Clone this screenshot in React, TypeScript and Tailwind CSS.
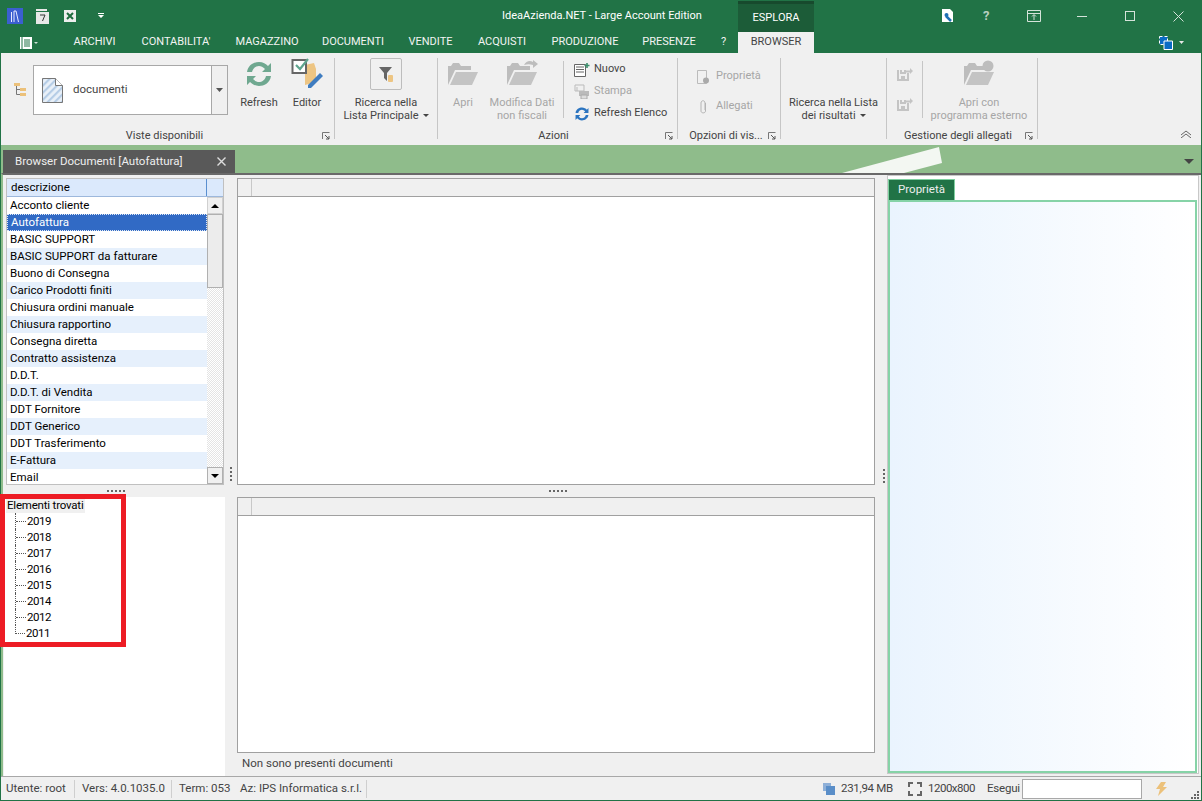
import { ReactNode } from "react";

const listItems = [
  "Acconto cliente",
  "Autofattura",
  "BASIC SUPPORT",
  "BASIC SUPPORT da fatturare",
  "Buono di Consegna",
  "Carico Prodotti finiti",
  "Chiusura ordini manuale",
  "Chiusura rapportino",
  "Consegna diretta",
  "Contratto assistenza",
  "D.D.T.",
  "D.D.T. di Vendita",
  "DDT Fornitore",
  "DDT Generico",
  "DDT Trasferimento",
  "E-Fattura",
  "Email",
];

const years = ["2019", "2018", "2017", "2016", "2015", "2014", "2012", "2011"];

const tabs = [
  { label: "ARCHIVI", width: "w-[41px]" },
  { label: "CONTABILITA'", width: "w-[70px]" },
  { label: "MAGAZZINO", width: "w-[60px]" },
  { label: "DOCUMENTI", width: "w-[60px]" },
  { label: "VENDITE", width: "w-[43px]" },
  { label: "ACQUISTI", width: "w-[48px]" },
  { label: "PRODUZIONE", width: "w-[66px]" },
  { label: "PRESENZE", width: "w-[50px]" },
  { label: "?", width: "w-[7px]" },
];

const Launcher = () => (
  <svg width="8" height="8" viewBox="0 0 8 8" className="shrink-0 mt-[4px]">
    <path d="M0.5 7V0.5H7.5" fill="none" stroke="#777" />
    <path d="M3 3L7 7M7 4V7H4" fill="none" stroke="#555" />
  </svg>
);

const Caret = ({ color = "#444" }: { color?: string }) => (
  <svg width="6" height="3" viewBox="0 0 6 3" className="inline-block ml-1 mb-[2px]">
    <path d="M0 0H6L3 3Z" fill={color} />
  </svg>
);

const FolderIcon = ({ badge }: { badge?: ReactNode }) => (
  <svg width="32" height="28" viewBox="0 0 32 28">
    <path d="M1 25V6H4L6 3H12L14 6H24V10H8L1 25Z" fill="#bdbdbd" />
    <path d="M3 25L9 12H31L25 25Z" fill="#c4c4c4" />
    {badge}
  </svg>
);

const RibbonGroup = ({
  width,
  label,
  launcher,
  labelClass = "",
  children,
}: {
  width: string;
  label?: string;
  launcher?: boolean;
  labelClass?: string;
  children: ReactNode;
}) => (
  <div className={`${width} shrink-0 h-[81px] mt-[5px] flex flex-col border-r border-[#c6c6c6]`}>
    <div className="flex h-[70px]">{children}</div>
    <div className="flex items-start h-[11px] pr-[4px]">
      <span className={`flex-1 text-center leading-[16px] text-[#444] ${labelClass}`}>{label}</span>
      {launcher && <Launcher />}
    </div>
  </div>
);

const BigButton = ({
  icon,
  lines,
  disabled,
  caret,
  className = "",
}: {
  icon?: ReactNode;
  lines: string[];
  disabled?: boolean;
  caret?: boolean;
  className?: string;
}) => (
  <div className={`flex flex-col items-center ${className}`}>
    <div className="h-[32px] flex items-center justify-center">{icon}</div>
    <div className={`mt-[6px] text-center leading-[13px] whitespace-nowrap ${disabled ? "text-[#a6a6a6]" : "text-[#444]"}`}>
      {lines.map((l, i) => (
        <div key={l}>
          {l}
          {caret && i === lines.length - 1 && <Caret />}
        </div>
      ))}
    </div>
  </div>
);

const SaveArrowIcon = () => (
  <svg width="16" height="13" viewBox="0 0 16 13">
    <path d="M1 2V12H11V5M4 2V5H8V2" fill="none" stroke="#c4c4c4" strokeWidth="2" />
    <path d="M4 8H8V11H4Z" fill="#c4c4c4" />
    <path d="M9 2.5H13V0L16 3L13 6V4.5H9Z" fill="#c4c4c4" />
  </svg>
);

const Grid = ({ className = "" }: { className?: string }) => (
  <div className={`bg-white border border-[#a0a0a0] ${className}`}>
    <div className="h-[18px] bg-[#f0f0f0] border-b border-[#a0a0a0] flex">
      <div className="w-[14px] border-r border-[#c8c8c8]" />
    </div>
  </div>
);

const Dots = ({ vertical }: { vertical?: boolean }) => (
  <div className={`flex gap-[2px] ${vertical ? "flex-col" : ""}`}>
    <span className="w-[2px] h-[2px] bg-[#666]" />
    <span className="w-[2px] h-[2px] bg-[#666]" />
    <span className="w-[2px] h-[2px] bg-[#666]" />
    <span className="w-[2px] h-[2px] bg-[#666]" />
    {!vertical && <span className="w-[2px] h-[2px] bg-[#666]" />}
  </div>
);

export default function App() {
  return (
    <div className="relative w-[1202px] h-[801px] overflow-hidden flex flex-col bg-[#217346] text-[11px] font-['Roboto',sans-serif]">
      {/* Title bar */}
      <div className="h-[32px] shrink-0 flex items-center relative">
        <div className="ml-[7px] w-[16px] h-[16px] bg-[#3b5fd0] flex items-center justify-center">
          <svg width="10" height="13" viewBox="0 0 10 13">
            <path d="M1.5 12V2M4 12V1H6L8.5 12" fill="none" stroke="#e8ecff" strokeWidth="1" />
          </svg>
        </div>
        <svg width="13" height="15" viewBox="0 0 13 15" className="ml-[13px]">
          <path d="M0 0H11V2H0Z" fill="#e8e8e8" />
          <path d="M0 3H13V15H0Z" fill="#e8e8e8" />
          <path d="M4 6H9L6.5 12" fill="none" stroke="#333" />
        </svg>
        <svg width="12" height="12" viewBox="0 0 12 12" className="ml-[15px]">
          <path d="M0 0H12V12H0Z" fill="#eee" />
          <path d="M3 3L9 9M9 3L3 9" stroke="#1f6b3e" strokeWidth="2" />
        </svg>
        <svg width="6" height="6" viewBox="0 0 6 6" className="ml-[22px]">
          <path d="M0 0H6V1H0Z M0 2H6L3 5Z" fill="#fff" />
        </svg>
        <div className="w-[398px]" />
        <span className="w-[198px] text-center text-white whitespace-nowrap">IdeaAzienda.NET - Large Account Edition</span>
        <div className="ml-[38px] w-[76px] h-[31px] mt-px bg-[#1c5c38] border-t-[3px] border-[#174a2d] flex items-center justify-center text-white">
          ESPLORA
        </div>
        <div className="flex-1" />
        <svg width="13" height="14" viewBox="0 0 13 14" className="mr-[28px]">
          <path d="M0 0H8L11 3V13H0Z" fill="#fff" />
          <path d="M4 7L9 12" stroke="#1f6fb5" strokeWidth="2.5" />
          <circle cx="4.5" cy="6" r="2" fill="#1f6fb5" />
        </svg>
        <span className="w-[7px] text-[13px] font-bold text-[#b8cfc0] mr-[37px]">?</span>
        <svg width="14" height="12" viewBox="0 0 14 12" className="mr-[36px]">
          <path d="M0.5 0.5H13.5V11.5H0.5ZM0.5 3.5H13.5M7 10V5M5 6.5L7 4.5L9 6.5" fill="none" stroke="#d5e3da" />
        </svg>
        <div className="w-[10px] h-px bg-[#d5e3da] mr-[38px]" />
        <div className="w-[10px] h-[10px] border border-[#d5e3da] mr-[38px]" />
        <svg width="11" height="11" viewBox="0 0 11 11" className="mr-[18px]">
          <path d="M0.5 0.5L10.5 10.5M10.5 0.5L0.5 10.5" stroke="#d5e3da" />
        </svg>
      </div>

      {/* Ribbon tabs */}
      <div className="h-[21px] shrink-0 flex items-center">
        <svg width="12" height="12" viewBox="0 0 12 12" className="ml-[20px]">
          <path d="M0 0H12V12H0Z" fill="#fff" />
          <path d="M2 0V12M4 3H10M4 5H10M4 7H10M4 9H10" stroke="#217346" />
        </svg>
        <svg width="4" height="2" viewBox="0 0 4 2" className="ml-[2px] mr-[36px]">
          <path d="M0 0H4L2 2Z" fill="#cfe0d6" />
        </svg>
        <div className="flex gap-[26px]">
          {tabs.map((t) => (
            <span key={t.label} className={`${t.width} flex justify-center text-[#f3f3f3] whitespace-nowrap`}>
              {t.label}
            </span>
          ))}
        </div>
        <div className="ml-[11px] w-[76px] h-full bg-[#f0f0f0] flex items-center justify-center text-[#444]">BROWSER</div>
        <div className="flex-1" />
        <div className="mr-[18px] flex items-center gap-[6px]">
          <svg width="14" height="14" viewBox="0 0 14 14">
            <path d="M0.5 0.5H8.5V8.5H0.5Z" fill="#0a6cc4" stroke="#fff" strokeDasharray="3 2" />
            <path d="M5 5H13.5V13.5H5Z" fill="#0a6cc4" stroke="#fff" />
          </svg>
          <svg width="5" height="3" viewBox="0 0 5 3">
            <path d="M0 0H5L2.5 3Z" fill="#e8e8e8" />
          </svg>
        </div>
      </div>

      {/* Ribbon */}
      <div className="h-[92px] shrink-0 mx-px bg-[#f0f0f0] flex relative">
        <RibbonGroup width="w-[334px]" label="Viste disponibili" launcher labelClass="pl-[6px]">
          <div className="w-[32px] flex items-start pt-[25px] pl-[13px]">
            <svg width="12" height="13" viewBox="0 0 12 13">
              <path d="M0 0H6V3H0ZM6 5H12V8H6ZM6 10H12V13H6Z" fill="#ecc17a" />
              <path d="M2.5 3V11.5H6M2.5 6.5H6" fill="none" stroke="#777" />
            </svg>
          </div>
          <div className="mt-[7px] w-[195px] h-[50px] bg-white border border-[#a8a8a8] flex">
            <div className="flex-1 flex items-center">
              <svg width="21" height="25" viewBox="0 0 21 25" className="ml-[8px]">
                <defs>
                  <pattern id="hatch" width="5" height="5" patternUnits="userSpaceOnUse" patternTransform="rotate(-45)">
                    <rect width="5" height="2.5" fill="#b6cde6" />
                    <rect y="2.5" width="5" height="2.5" fill="#e9f0f8" />
                  </pattern>
                </defs>
                <path d="M0.5 0.5H13.5L20.5 7.5V24.5H0.5Z" fill="url(#hatch)" stroke="#777" />
                <path d="M13.5 0.5V7.5H20.5" fill="#fff" stroke="#777" />
              </svg>
              <span className="ml-[10px] text-[#444] text-[11.5px]">documenti</span>
            </div>
            <div className="w-[16px] bg-[#f0f0f0] border-l border-[#a8a8a8] flex items-center justify-center">
              <svg width="7" height="4" viewBox="0 0 7 4">
                <path d="M0 0H7L3.5 4Z" fill="#555" />
              </svg>
            </div>
          </div>
          <BigButton
            className="ml-[11px] w-[40px]"
            lines={["Refresh"]}
            icon={
              <svg width="26" height="26" viewBox="0 0 26 26" fill="#6fa890">
                <path d="M1 11C2 4 8 1 13 1C17 1 20 3 22 5L25 2V11H16L19 8C17 6 15 5 13 5C10 5 7 7 6 11Z" />
                <path d="M25 15C24 22 18 25 13 25C9 25 6 23 4 21L1 24V15H10L7 18C9 20 11 21 13 21C16 21 19 19 20 15Z" />
              </svg>
            }
          />
          <BigButton
            className="ml-[8px] w-[40px]"
            lines={["Editor"]}
            icon={
              <svg width="33" height="30" viewBox="0 0 33 30" className="mt-[-3px]">
                <path d="M14 7L23 5L25 11V24L14 27Z" fill="#edc583" />
                <path d="M1.5 2H15V15H1.5Z" fill="#fff" stroke="#666" strokeWidth="2" />
                <path d="M5 7L9 11L17 1" fill="none" stroke="#5fa58f" strokeWidth="2.2" />
                <path d="M17 27L29 15L32 18L20 30H17Z" fill="#3f7cc0" />
              </svg>
            }
          />
        </RibbonGroup>

        <RibbonGroup width="w-[103px]">
          <BigButton
            className="w-full"
            lines={["Ricerca nella", "Lista Principale"]}
            caret
            icon={
              <div className="w-[32px] h-[32px] border border-[#bdbdbd] rounded-[2px] flex items-center justify-center">
                <svg width="14" height="15" viewBox="0 0 14 15">
                  <path d="M0 0H13L8 6V14L5 11V6Z" fill="#666" />
                  <rect x="9" y="8" width="5" height="7" rx="1" fill="#edc583" />
                </svg>
              </div>
            }
          />
        </RibbonGroup>

        <RibbonGroup width="w-[240px]" label="Azioni" launcher labelClass="pl-[4px]">
          <BigButton
            className="ml-[9px] w-[32px]"
            disabled
            lines={["Apri"]}
            icon={<FolderIcon />}
          />
          <BigButton
            className="ml-[12px] w-[62px]"
            disabled
            lines={["Modifica Dati", "non fiscali"]}
            icon={<FolderIcon badge={<path d="M18 5C20 1 24 0 27 2V0L32 4L27 8V5C24 4 21 4 18 5Z" fill="#bdbdbd" />} />}
          />
          <div className="ml-[10px] w-px h-[57px] mt-[3px] bg-[#c6c6c6]" />
          <div className="ml-[10px] flex flex-col gap-[5px] mt-[3px]">
            <div className="h-[17px] flex items-center gap-[4px] text-[#444]">
              <svg width="16" height="14" viewBox="0 0 16 14">
                <path d="M0.5 1.5H11.5V13.5H0.5Z" fill="#fff" stroke="#666" />
                <path d="M2 4H10M2 6.5H10M2 9H10" stroke="#666" />
                <path d="M13 0V5M10.5 2.5H15.5" stroke="#3a8e6b" strokeWidth="1.6" />
              </svg>
              Nuovo
            </div>
            <div className="h-[17px] flex items-center gap-[4px] text-[#a6a6a6]">
              <svg width="16" height="15" viewBox="0 0 16 15">
                <path d="M1 1H10V7H1Z M3 3V7" fill="none" stroke="#bbb" />
                <path d="M5 7H15V12H5Z" fill="#bbb" />
                <path d="M7 11H13V15H7Z" fill="#ddd" stroke="#aaa" />
              </svg>
              Stampa
            </div>
            <div className="h-[17px] flex items-center gap-[5px] text-[#444]">
              <svg width="14" height="14" viewBox="0 0 26 26" fill="#2b74c0" className="ml-[1px]">
                <path d="M1 11C2 4 8 1 13 1C17 1 20 3 22 5L25 2V11H16L19 8C17 6 15 5 13 5C10 5 7 7 6 11Z" />
                <path d="M25 15C24 22 18 25 13 25C9 25 6 23 4 21L1 24V15H10L7 18C9 20 11 21 13 21C16 21 19 19 20 15Z" />
              </svg>
              Refresh Elenco
            </div>
          </div>
        </RibbonGroup>

        <RibbonGroup width="w-[103px]" label="Opzioni di vis..." launcher labelClass="pl-[6px]">
          <div className="ml-[19px] mt-[12px] flex flex-col gap-[17px] text-[#a6a6a6]">
            <div className="h-[13px] flex items-center gap-[6px]">
              <svg width="13" height="14" viewBox="0 0 13 14">
                <path d="M0.5 0.5H9.5V13.5H0.5Z" fill="none" stroke="#bbb" />
                <circle cx="9" cy="10.5" r="3" fill="#aaa" />
              </svg>
              Proprietà
            </div>
            <div className="h-[13px] flex items-center gap-[9px] ml-[3px]">
              <svg width="7" height="14" viewBox="0 0 7 14">
                <path d="M5.5 3V11C5.5 13.5 1 13.5 1 11V3C1 0 5 0 5 3V10" fill="none" stroke="#b4b4b4" />
              </svg>
              Allegati
            </div>
          </div>
        </RibbonGroup>

        <RibbonGroup width="w-[106px]">
          <div className="w-full mt-[38px] text-center leading-[13px] text-[#444] whitespace-nowrap">
            <div>Ricerca nella Lista</div>
            <div>
              dei risultati
              <Caret />
            </div>
          </div>
        </RibbonGroup>

        <RibbonGroup width="w-[151px]" label="Gestione degli allegati" launcher labelClass="pl-[4px]">
          <div className="ml-[10px] mt-[10px] flex flex-col gap-[17px]">
            <SaveArrowIcon />
            <SaveArrowIcon />
          </div>
          <div className="ml-[9px] w-px h-[57px] mt-[3px] bg-[#c6c6c6]" />
          <BigButton
            className="w-[112px]"
            disabled
            lines={["Apri con", "programma esterno"]}
            icon={<FolderIcon badge={<circle cx="25" cy="6" r="5.5" fill="#bdbdbd" />} />}
          />
        </RibbonGroup>

        <svg width="14" height="8" viewBox="0 0 14 8" className="absolute right-[8px] bottom-[7px]">
          <path d="M2 5L7 1L12 5M2 8L7 4L12 8" fill="none" stroke="#666" />
        </svg>
      </div>

      {/* Document tab band */}
      <div className="h-[28px] shrink-0 mx-px bg-[#8fbc8b] relative flex items-end pl-[2px]">
        <div className="w-[232px] h-[23px] bg-[#595959] text-[#eee] text-[11.5px] flex items-center pl-[12px] pr-[9px]">
          <span className="flex-1 whitespace-nowrap">Browser Documenti [Autofattura]</span>
          <svg width="9" height="9" viewBox="0 0 9 9">
            <path d="M0.5 0.5L8.5 8.5M8.5 0.5L0.5 8.5" stroke="#ddd" strokeWidth="1.4" />
          </svg>
        </div>
        <svg width="110" height="28" viewBox="0 0 110 28" className="absolute left-[841px] top-0">
          <path d="M0 28L97 2L100 18L62 28Z" fill="#f3f7f2" />
        </svg>
        <svg width="10" height="5" viewBox="0 0 10 5" className="absolute right-[7px] top-[14px]">
          <path d="M0 0H10L5 5Z" fill="#444" />
        </svg>
      </div>

      {/* Main area */}
      <div className="flex-1 min-h-0 mx-px bg-[#f0f0f0] border-t-2 border-[#696969] border-l-2 border-l-[#8fbc8b] flex text-[11.5px]">
        {/* Left and middle */}
        <div className="w-[877px] shrink-0 flex flex-col">
          {/* Top row */}
          <div className="h-[310px] shrink-0 flex">
            <div className="w-[218px] ml-[3px] mt-[3px] h-[307px] flex flex-col border border-[#c0c0c0] bg-white">
              <div className="h-[18px] shrink-0 bg-[#dbe9fc] border-b border-[#9db8dc] flex">
                <div className="w-[200px] border-r border-[#5a8fd0] pl-[4px] pt-px flex items-center text-black">descrizione</div>
              </div>
              <div className="flex-1 flex min-h-0">
                <div className="w-[200px] shrink-0 overflow-hidden">
                  {listItems.map((item, i) => (
                    <div
                      key={item}
                      className={`h-[17px] pl-[3px] flex items-center whitespace-nowrap ${
                        i === 1
                          ? "bg-[#316ac5] text-white border border-dotted border-[#dfe8f5] pl-[2px]"
                          : i % 2 === 1
                            ? "bg-[#e6f0fc] text-black"
                            : "bg-white text-black"
                      }`}
                    >
                      {item}
                    </div>
                  ))}
                </div>
                <div className="w-[16px] flex flex-col bg-[repeating-conic-gradient(#e4e4e4_0%_25%,#ffffff_0%_50%)] bg-[length:2px_2px]">
                  <div className="h-[17px] bg-[#f0f0f0] border border-[#d0d0d0] flex items-center justify-center">
                    <svg width="8" height="4" viewBox="0 0 8 4">
                      <path d="M0 4H8L4 0Z" fill="#000" />
                    </svg>
                  </div>
                  <div className="h-[74px] bg-[#ececec] border border-[#b0b0b0]" />
                  <div className="flex-1" />
                  <div className="h-[17px] bg-[#f0f0f0] border border-[#b0b0b0] flex items-center justify-center">
                    <svg width="8" height="4" viewBox="0 0 8 4">
                      <path d="M0 0H8L4 4Z" fill="#000" />
                    </svg>
                  </div>
                </div>
              </div>
            </div>
            <div className="w-[13px] flex items-end justify-center pb-[4px]">
              <Dots vertical />
            </div>
            <Grid className="w-[638px] mt-[3px] h-[307px]" />
          </div>

          {/* Horizontal splitter */}
          <div className="h-[12px] shrink-0 flex items-center">
            <div className="w-[224px] flex justify-center pl-[2px]">
              <Dots />
            </div>
            <div className="w-[651px] flex justify-center pl-[11px]">
              <Dots />
            </div>
          </div>

          {/* Bottom row */}
          <div className="flex-1 flex min-h-0">
            <div className="w-[221px] shrink-0 bg-white pl-[2px] pt-[2px] ml-[1px]">
              <div className="h-[14px] w-[79px] bg-[#f0f0f0] flex items-center text-black pl-[1px] whitespace-nowrap tracking-[-0.2px]">
                Elementi trovati
              </div>
              <div className="ml-[9px]">
                {years.map((y, i) => (
                  <div
                    key={y}
                    className={`h-[16px] flex text-black ${i < years.length - 1 ? "border-l border-dotted border-[#555]" : ""}`}
                  >
                    <div
                      className={`h-[9px] w-[10px] border-b border-dotted border-[#555] ${
                        i === years.length - 1 ? "border-l" : ""
                      }`}
                    />
                    <span className="ml-[1px] leading-[16px] tracking-[-0.5px]">{y}</span>
                  </div>
                ))}
              </div>
            </div>
            <div className="ml-[12px] flex-1 flex flex-col min-w-0 pr-[3px]">
              <Grid className="h-[256px] w-[638px]" />
              <div className="h-[22px] pl-[5px] flex items-center text-[#444]">Non sono presenti documenti</div>
            </div>
          </div>
        </div>

        {/* Right splitter */}
        <div className="w-[7px] shrink-0 flex items-center justify-center">
          <Dots vertical />
        </div>

        {/* Properties panel */}
        <div className="w-[312px] shrink-0 mb-[2px] bg-white border border-[#c8c8c8] flex flex-col pt-[3px] pr-px">
          <div className="w-[67px] h-[21px] bg-[#217346] border border-[#7fd0a0] border-b-0 text-[#eee] flex items-center justify-center">
            Proprietà
          </div>
          <div className="flex-1 border-2 border-[#86d3a7] bg-gradient-to-r from-[#eaf4fe] to-white" />
        </div>
      </div>

      {/* Status bar */}
      <div className="h-[24px] shrink-0 mx-px mb-px bg-[#f0f0f0] border-t border-[#a8a8a8] flex items-center pt-px text-[#444] text-[11.5px]">
        <div className="h-[18px] w-[74px] pl-[5px] flex items-center border-r border-[#cfcfcf] whitespace-nowrap">Utente: root</div>
        <div className="h-[18px] w-[97px] pl-[7px] flex items-center border-r border-[#cfcfcf] whitespace-nowrap">Vers: 4.0.1035.0</div>
        <div className="h-[18px] w-[195px] pl-[7px] flex items-center border-r border-[#cfcfcf] whitespace-nowrap">
          <span className="w-[61px]">Term: 053</span>
          <span>Az: IPS Informatica s.r.l.</span>
        </div>
        <div className="flex-1" />
        <svg width="12" height="12" viewBox="0 0 12 12">
          <rect x="0" y="0" width="8" height="8" fill="#8fb0d8" />
          <rect x="3" y="3" width="9" height="9" fill="#5a8ec8" />
        </svg>
        <span className="ml-[6px] w-[50px] whitespace-nowrap tracking-[-0.3px]">231,94 MB</span>
        <svg width="14" height="14" viewBox="0 0 14 14" className="ml-[17px]">
          <path d="M1 5V1H5M9 1H13V5M13 9V13H9M5 13H1V9" fill="none" stroke="#666" strokeWidth="2" />
        </svg>
        <span className="ml-[6px] w-[47px] whitespace-nowrap tracking-[-0.5px]">1200x800</span>
        <span className="ml-[12px] w-[31px] whitespace-nowrap tracking-[-0.2px]">Esegui</span>
        <div className="ml-[4px] w-[120px] h-[20px] bg-white border border-[#a8a8a8]" />
        <svg width="11" height="14" viewBox="0 0 11 14" className="ml-[14px]">
          <path d="M5 0H10L7 5H11L2 14L4 7H0Z" fill="#ecc17a" />
        </svg>
        <svg width="8" height="8" viewBox="0 0 8 8" className="ml-[24px] mr-[2px] self-end mb-[1px]">
          <path d="M6 0H8V2H6ZM3 3H5V5H3ZM6 3H8V5H6ZM0 6H2V8H0ZM3 6H5V8H3ZM6 6H8V8H6Z" fill="#666" />
        </svg>
      </div>

      {/* Red highlight drawn over the tree */}
      <div className="absolute left-0 top-[494px] w-[126px] h-[153px] border-[5px] border-[#ed1c24]" />
    </div>
  );
}
